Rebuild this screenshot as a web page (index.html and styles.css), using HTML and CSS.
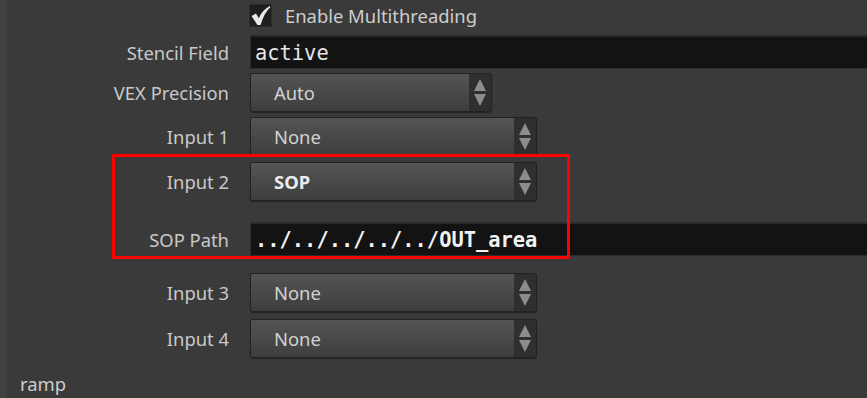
FILE: index.html
```html
<!DOCTYPE html>
<html>
<head>
<meta charset="utf-8">
<link rel="stylesheet" href="styles.css">
</head>
<body>
<div class="panel">
  <div class="row r0">
    <div class="label"></div>
    <div class="check-wrap">
      <span class="checkbox"><svg width="21" height="21" viewBox="0 0 21 21"><path d="M1.5 11 L6 8.5 L8.8 13.2 C11.2 7.8 14.8 3.4 19.8 1 L20.4 2.2 C16.2 6 12.8 12 10.6 20 L7.4 20 Z" fill="#e8e8e8"/></svg></span>
      <span class="check-label">Enable Multithreading</span>
    </div>
  </div>
  <div class="row r1">
    <div class="label">Stencil Field</div>
    <div class="field"><span class="mono">active</span></div>
  </div>
  <div class="row r2">
    <div class="label">VEX Precision</div>
    <div class="menu short"><span class="menu-text">Auto</span><span class="arrows"><i class="up"></i><i class="down"></i></span></div>
  </div>
  <div class="row r3">
    <div class="label">Input 1</div>
    <div class="menu"><span class="menu-text">None</span><span class="arrows"><i class="up"></i><i class="down"></i></span></div>
  </div>
  <div class="row r4">
    <div class="label">Input 2</div>
    <div class="menu"><span class="menu-text bold">SOP</span><span class="arrows"><i class="up"></i><i class="down"></i></span></div>
  </div>
  <div class="row r5">
    <div class="label">SOP Path</div>
    <div class="field"><span class="mono bold">../../../../../OUT_area</span></div>
  </div>
  <div class="row r6">
    <div class="label">Input 3</div>
    <div class="menu"><span class="menu-text">None</span><span class="arrows"><i class="up"></i><i class="down"></i></span></div>
  </div>
  <div class="row r7">
    <div class="label">Input 4</div>
    <div class="menu"><span class="menu-text">None</span><span class="arrows"><i class="up"></i><i class="down"></i></span></div>
  </div>
  <div class="ramp">ramp</div>
  <div class="highlight"></div>
</div>
</body>
</html>
```

FILE: styles.css
```css
* { box-sizing: border-box; }
html, body { margin: 0; padding: 0; }
body {
  width: 867px;
  height: 398px;
  overflow: hidden;
  background: #3a3a3a;
  font-family: "Noto Sans", "Open Sans", sans-serif;
  font-size: 18.4px;
  color: #c9c9c9;
}
.panel {
  position: relative;
  height: 398px;
  display: flex;
  flex-direction: column;
  border-left: 7px solid #414141;
}
.row {
  display: grid;
  grid-template-columns: 222px 1fr;
  column-gap: 21px;
  align-items: center;
}
.label {
  text-align: right;
  white-space: nowrap;
}
.r0 { margin-top: 4px; height: 23px; }
.r1 { margin-top: 8px; height: 34px; }
.r2 { margin-top: 4px; height: 39px; }
.r3 { margin-top: 5px; height: 39px; }
.r4 { margin-top: 6px; height: 39px; }
.r5 { margin-top: 21px; height: 34px; }
.r6 { margin-top: 17px; height: 39px; }
.r7 { margin-top: 7px; height: 39px; }

.check-wrap {
  display: flex;
  align-items: center;
  height: 23px;
  margin-left: -1px;
}
.checkbox {
  width: 23px;
  height: 23px;
  background: #1e1e1e;
  border: 1px solid #2c2c2c;
  display: flex;
  align-items: center;
  justify-content: center;
}
.check-label {
  margin-left: 13px;
  color: #cdcdcd;
}

.field {
  height: 34px;
  background: #131313;
  border-top: 2px solid #2b2b2b;
  border-bottom: 1px solid #2b2b2b;
  border-left: 1px solid #2b2b2b;
  display: flex;
  align-items: center;
  padding-left: 4px;
}
.mono {
  font-family: "DejaVu Sans Mono", monospace;
  font-size: 20.4px;
  color: #e6e6e6;
}
.mono.bold { font-weight: bold; color: #f2f2f2; }

.menu {
  width: 287px;
  height: 39px;
  border: 1px solid #222;
  border-radius: 2px;
  background: linear-gradient(#545454, #3e3e3e);
  display: flex;
  align-items: center;
  box-shadow: 0 1px 1px rgba(0,0,0,0.35);
}
.menu.short { width: 242px; }
.menu-text {
  flex: 1;
  padding-left: 23px;
  color: #d2d2d2;
}
.menu-text.bold { font-weight: bold; color: #ececec; }
.arrows {
  width: 22px;
  height: 100%;
  background: #2f2f2f;
  display: flex;
  flex-direction: column;
  align-items: center;
  justify-content: center;
  gap: 3px;
}
.arrows i {
  display: block;
  width: 0;
  height: 0;
  border-left: 6.5px solid transparent;
  border-right: 6.5px solid transparent;
}
.arrows .up { border-bottom: 12px solid #8c8c8c; }
.arrows .down { border-top: 12px solid #8c8c8c; }

.ramp {
  margin-top: 13px;
  margin-left: 13px;
  color: #cdcdcd;
}
.highlight {
  position: absolute;
  left: 105px;
  top: 154px;
  width: 458px;
  height: 105px;
  border: 3.5px solid #ff0000;
}
```
